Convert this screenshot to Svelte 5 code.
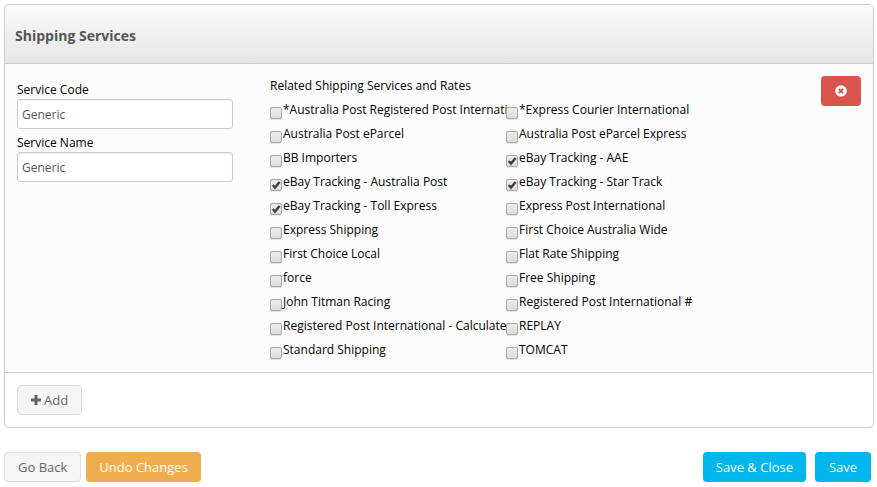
<script>
  let code = $state('Generic');
  let name = $state('Generic');
  let services = $state([
    ['*Australia Post Registered Post Internati', false],
    ['*Express Courier International', false],
    ['Australia Post eParcel', false],
    ['Australia Post eParcel Express', false],
    ['BB Importers', false],
    ['eBay Tracking - AAE', true],
    ['eBay Tracking - Australia Post', true],
    ['eBay Tracking - Star Track', true],
    ['eBay Tracking - Toll Express', true],
    ['Express Post International', false],
    ['Express Shipping', false],
    ['First Choice Australia Wide', false],
    ['First Choice Local', false],
    ['Flat Rate Shipping', false],
    ['force', false],
    ['Free Shipping', false],
    ['John Titman Racing', false],
    ['Registered Post International #', false],
    ['Registered Post International - Calculate', false],
    ['REPLAY', false],
    ['Standard Shipping', false],
    ['TOMCAT', false]
  ].map(([label, checked]) => ({ label, checked })));
</script>

<main>
  <section class="panel">
    <header><h1>Shipping Services</h1></header>
    <div class="body">
      <div class="fields">
        <label for="code">Service Code</label>
        <input id="code" class="text" type="text" bind:value={code} />
        <label for="name">Service Name</label>
        <input id="name" class="text" type="text" bind:value={name} />
      </div>
      <fieldset>
        <legend>Related Shipping Services and Rates</legend>
        <div class="services">
          {#each services as service}
            <label class="service">
              <span class="box">
                <input type="checkbox" bind:checked={service.checked} />
                {#if service.checked}
                  <svg viewBox="0 0 12 12" aria-hidden="true"><path d="M2.8 6 5 8.6 9.6 3" /></svg>
                {/if}
              </span>
              <span class="name">{service.label}</span>
            </label>
          {/each}
        </div>
      </fieldset>
      <button class="btn danger" type="button" aria-label="Remove">
        <svg width="12" height="12" viewBox="0 0 12 12" aria-hidden="true">
          <circle cx="6" cy="6" r="5.8" fill="#fff" />
          <path d="M3.8 3.8 8.2 8.2M8.2 3.8 3.8 8.2" stroke="#d9534f" stroke-width="1.9" />
        </svg>
      </button>
    </div>
    <footer>
      <button class="btn plain" type="button">
        <svg width="10" height="10" viewBox="0 0 10 10" aria-hidden="true"><path d="M5 0v10M0 5h10" stroke="#666" stroke-width="3" /></svg>
        Add
      </button>
    </footer>
  </section>
  <div class="actions">
    <button class="btn plain" type="button">Go Back</button>
    <button class="btn warning" type="button">Undo Changes</button>
    <span class="right">
      <button class="btn primary" type="button">Save &amp; Close</button>
      <button class="btn primary" type="button">Save</button>
    </span>
  </div>
</main>

<style>
  :global(body) {
    margin: 0;
    background: #fff;
  }
  main {
    padding: 4px 3px 4px 4px;
    font: 12px/18px "Open Sans", sans-serif;
    color: #000;
  }
  main * {
    box-sizing: border-box;
  }
  .panel {
    border: 1px solid #ccc;
    border-radius: 5px;
    overflow: hidden;
  }
  header {
    padding: 21px 10px 17px;
    border-bottom: 1px solid #ccc;
    background: linear-gradient(#fafafa, #e6e6e6);
  }
  h1 {
    margin: 0;
    font-size: 14px;
    line-height: 20px;
    font-weight: 700;
    color: #555;
  }
  .body {
    display: flex;
    align-items: flex-start;
    padding: 12px 12px 10px;
    background: #fcfcfc;
    border-bottom: 1px solid #ccc;
  }
  .fields {
    flex: 0 1 216px;
    display: flex;
    flex-direction: column;
    padding-top: 5px;
    margin-right: 37px;
  }
  .text {
    width: 100%;
    height: 30px;
    margin: 0 0 5px;
    padding: 0 4px;
    border: 1px solid #ccc;
    border-radius: 3px;
    background: #fff;
    box-shadow: inset 0 1px 1px rgba(0, 0, 0, 0.08);
    font: inherit;
    color: #555;
  }
  fieldset {
    flex: 1;
    min-width: 0;
    margin: 0;
    padding: 0;
    border: 0;
  }
  legend {
    padding: 0;
    line-height: 20px;
  }
  .services {
    display: grid;
    grid-template-columns: repeat(2, 236px);
    grid-auto-rows: 24px;
    padding-top: 2px;
  }
  .service {
    display: flex;
    align-items: flex-start;
    gap: 1px;
    white-space: nowrap;
    padding-top: 3px;
  }
  .box {
    flex: none;
    display: grid;
    margin-top: 6px;
  }
  .box > * {
    grid-area: 1 / 1;
    width: 12px;
    height: 12px;
  }
  .box input {
    appearance: none;
    margin: 0;
    border: 1px solid #a6a6a6;
    border-radius: 2px;
    background: linear-gradient(#ededed, #dcdcdc);
    box-shadow: 0 1px 0 rgba(0, 0, 0, 0.08);
  }
  .box svg {
    pointer-events: none;
  }
  .box path {
    fill: none;
    stroke: #404040;
    stroke-width: 2.4;
  }
  .btn {
    display: inline-flex;
    align-items: center;
    justify-content: center;
    gap: 3px;
    height: 30px;
    padding: 0 12px;
    border: 1px solid transparent;
    border-radius: 4px;
    font: 13px/18px "Open Sans", sans-serif;
    white-space: nowrap;
    color: #fff;
  }
  .plain {
    padding: 0 13px;
    border-color: #ddd;
    background: #f5f5f5;
    color: #666;
  }
  .warning {
    background: #f0ad4e;
  }
  .primary {
    min-width: 56px;
    background: #00b7eb;
  }
  .danger {
    padding: 0 13px;
    min-width: 39px;
    background: #d9534f;
  }
  footer {
    display: flex;
    padding: 12px;
  }
  .actions {
    display: flex;
    gap: 5px;
    padding: 24px 3px 0 0;
  }
  .right {
    display: flex;
    gap: 9px;
    margin-left: auto;
  }
</style>
